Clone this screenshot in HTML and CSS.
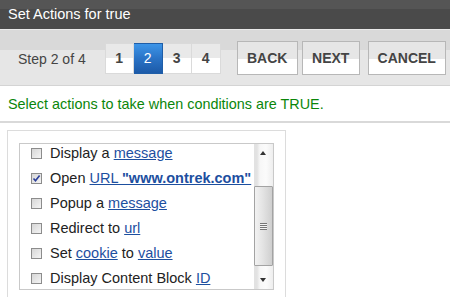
FILE: index.html
```html
<!DOCTYPE html>
<html>
<head>
<meta charset="utf-8">
<link rel="stylesheet" href="styles.css">
</head>
<body>
<div class="titlebar">Set Actions for true</div>
<div class="toolbar">
  <span class="step-label">Step 2 of 4</span>
  <div class="steps">
    <span class="step">1</span>
    <span class="step active">2</span>
    <span class="step">3</span>
    <span class="step">4</span>
  </div>
  <span class="btn btn-back">BACK</span>
  <span class="btn btn-next">NEXT</span>
  <span class="btn btn-cancel">CANCEL</span>
</div>
<div class="intro">Select actions to take when conditions are TRUE.</div>
<div class="content">
  <div class="outer">
    <div class="listbox">
      <div class="viewport">
        <ul class="actions">
          <li><span class="cb"></span>Display a <a href="#">message</a></li>
          <li><span class="cb checked"><svg viewBox="0 0 9 9" width="9" height="9"><path d="M1.5 4.5 L3.5 6.8 L7.6 1.6" fill="none" stroke="#2b3f9a" stroke-width="1.6"/></svg></span>Open <a href="#">URL <b>"www.ontrek.com"</b></a></li>
          <li><span class="cb"></span>Popup a <a href="#">message</a></li>
          <li><span class="cb"></span>Redirect to <a href="#">url</a></li>
          <li><span class="cb"></span>Set <a href="#">cookie</a> to <a href="#">value</a></li>
          <li><span class="cb"></span>Display Content Block <a href="#">ID</a></li>
        </ul>
      </div>
      <div class="scrollbar">
        <div class="arrow up"></div>
        <div class="track">
          <div class="thumb"><span class="grip"></span></div>
        </div>
        <div class="arrow down"></div>
      </div>
    </div>
  </div>
</div>
</body>
</html>
```

FILE: styles.css
```css
html, body {
  margin: 0;
  padding: 0;
  background: #fff;
  font-family: "Liberation Sans", Arial, sans-serif;
  width: 450px;
  height: 297px;
  overflow: hidden;
}

.titlebar {
  height: 30px;
  box-sizing: border-box;
  padding-left: 8px;
  padding-top: 6px;
  background: linear-gradient(#555 0, #555 9px, #4a4a4a 9px, #4a4a4a 100%);
  color: #fff;
  font-size: 14.5px;
  line-height: 17px;
  border-bottom: 1px solid #e9e9e9;
}

.toolbar {
  height: 55px;
  display: flex;
  align-items: center;
  background: linear-gradient(#d9d9d9 0, #d9d9d9 20px, #e6e6e6 20px, #e6e6e6 100%);
  border-bottom: 1px solid #d4d4d4;
}

.step-label {
  margin-left: 18px;
  font-size: 14px;
  color: #444;
  margin-top: 2px;
}

.steps {
  display: flex;
  margin-left: 19px;
  margin-top: 1px;
}

.step {
  width: 29px;
  height: 31px;
  box-sizing: border-box;
  border: 1px solid #dadada;
  border-left-width: 0;
  background: linear-gradient(#e9e9e9 0, #e9e9e9 50%, #fff 50%, #fff 100%);
  display: flex;
  align-items: center;
  justify-content: center;
  font-weight: bold;
  font-size: 14px;
  color: #444;
}
.step:first-child { border-left-width: 1px; }

.step.active {
  background: linear-gradient(#3d95e8, #2a73c6 50%, #1c5aa8);
  border-color: #1f5ea8;
  color: #fff;
  font-weight: normal;
}

.btn {
  height: 34px;
  box-sizing: border-box;
  border: 1px solid #b7b7b7;
  background: linear-gradient(#e6e6e6 0, #e6e6e6 52%, #fff 52%, #fff 100%);
  display: flex;
  align-items: center;
  justify-content: center;
  font-weight: bold;
  font-size: 14px;
  color: #444;
}
.btn-back { width: 61px; margin-left: 16px; }
.btn-next { width: 58px; margin-left: 4px; }
.btn-cancel { width: 78px; margin-left: 8px; }

.intro {
  height: 37px;
  box-sizing: border-box;
  padding: 10px 0 0 8px;
  font-size: 14.4px;
  line-height: 16px;
  color: #0a860a;
  border-bottom: 2px solid #d9d9d9;
}

.content {
  padding: 7px 0 0 7px;
}

.outer {
  width: 279px;
  height: 180px;
  box-sizing: border-box;
  border: 1px solid #dcdcdc;
  padding: 12px 11px 0 11px;
}

.listbox {
  height: 147px;
  box-sizing: border-box;
  border: 1px solid #c9c9c9;
  display: flex;
}

.viewport {
  flex: 1;
  overflow: hidden;
}

.actions {
  list-style: none;
  margin: -3px 0 0 0;
  padding: 0 0 0 11px;
  font-size: 14.5px;
  color: #222;
}

.actions li {
  height: 25px;
  line-height: 25px;
  white-space: nowrap;
}

.actions a {
  color: #1d4f9f;
  text-decoration: underline;
}

.cb {
  display: inline-block;
  vertical-align: middle;
  position: relative;
  top: -1px;
  width: 11px;
  height: 11px;
  box-sizing: border-box;
  border: 1px solid #8c8c8c;
  background: linear-gradient(135deg, #d6d6d6, #f4f4f4);
  margin-right: 8px;
  line-height: 0;
}
.cb svg { display: block; }

.scrollbar {
  width: 19px;
  display: flex;
  flex-direction: column;
  background: linear-gradient(to right, #e2e2e2 0, #e2e2e2 3px, #f7f7f7 6px, #fbfbfb 12px, #eeeeee 19px);
}

.arrow {
  height: 17px;
  position: relative;
}
.arrow::after {
  content: "";
  position: absolute;
  left: 6px;
  width: 0;
  height: 0;
  border-left: 3.5px solid transparent;
  border-right: 3.5px solid transparent;
}
.arrow.up::after {
  top: 7px;
  border-bottom: 4px solid #333;
}
.arrow.down::after {
  bottom: 7px;
  border-top: 4px solid #333;
}

.track {
  flex: 1;
  padding-top: 25px;
}

.thumb {
  height: 80px;
  box-sizing: border-box;
  border: 1px solid #a3a3a3;
  border-radius: 1px;
  background: linear-gradient(to right, #f2f2f2, #e2e2e2 50%, #cfcfcf);
  display: flex;
  align-items: center;
  justify-content: center;
}

.grip {
  width: 7px;
  height: 7px;
  background: repeating-linear-gradient(#777 0, #777 1px, #f4f4f4 1px, #f4f4f4 2px);
}
```
